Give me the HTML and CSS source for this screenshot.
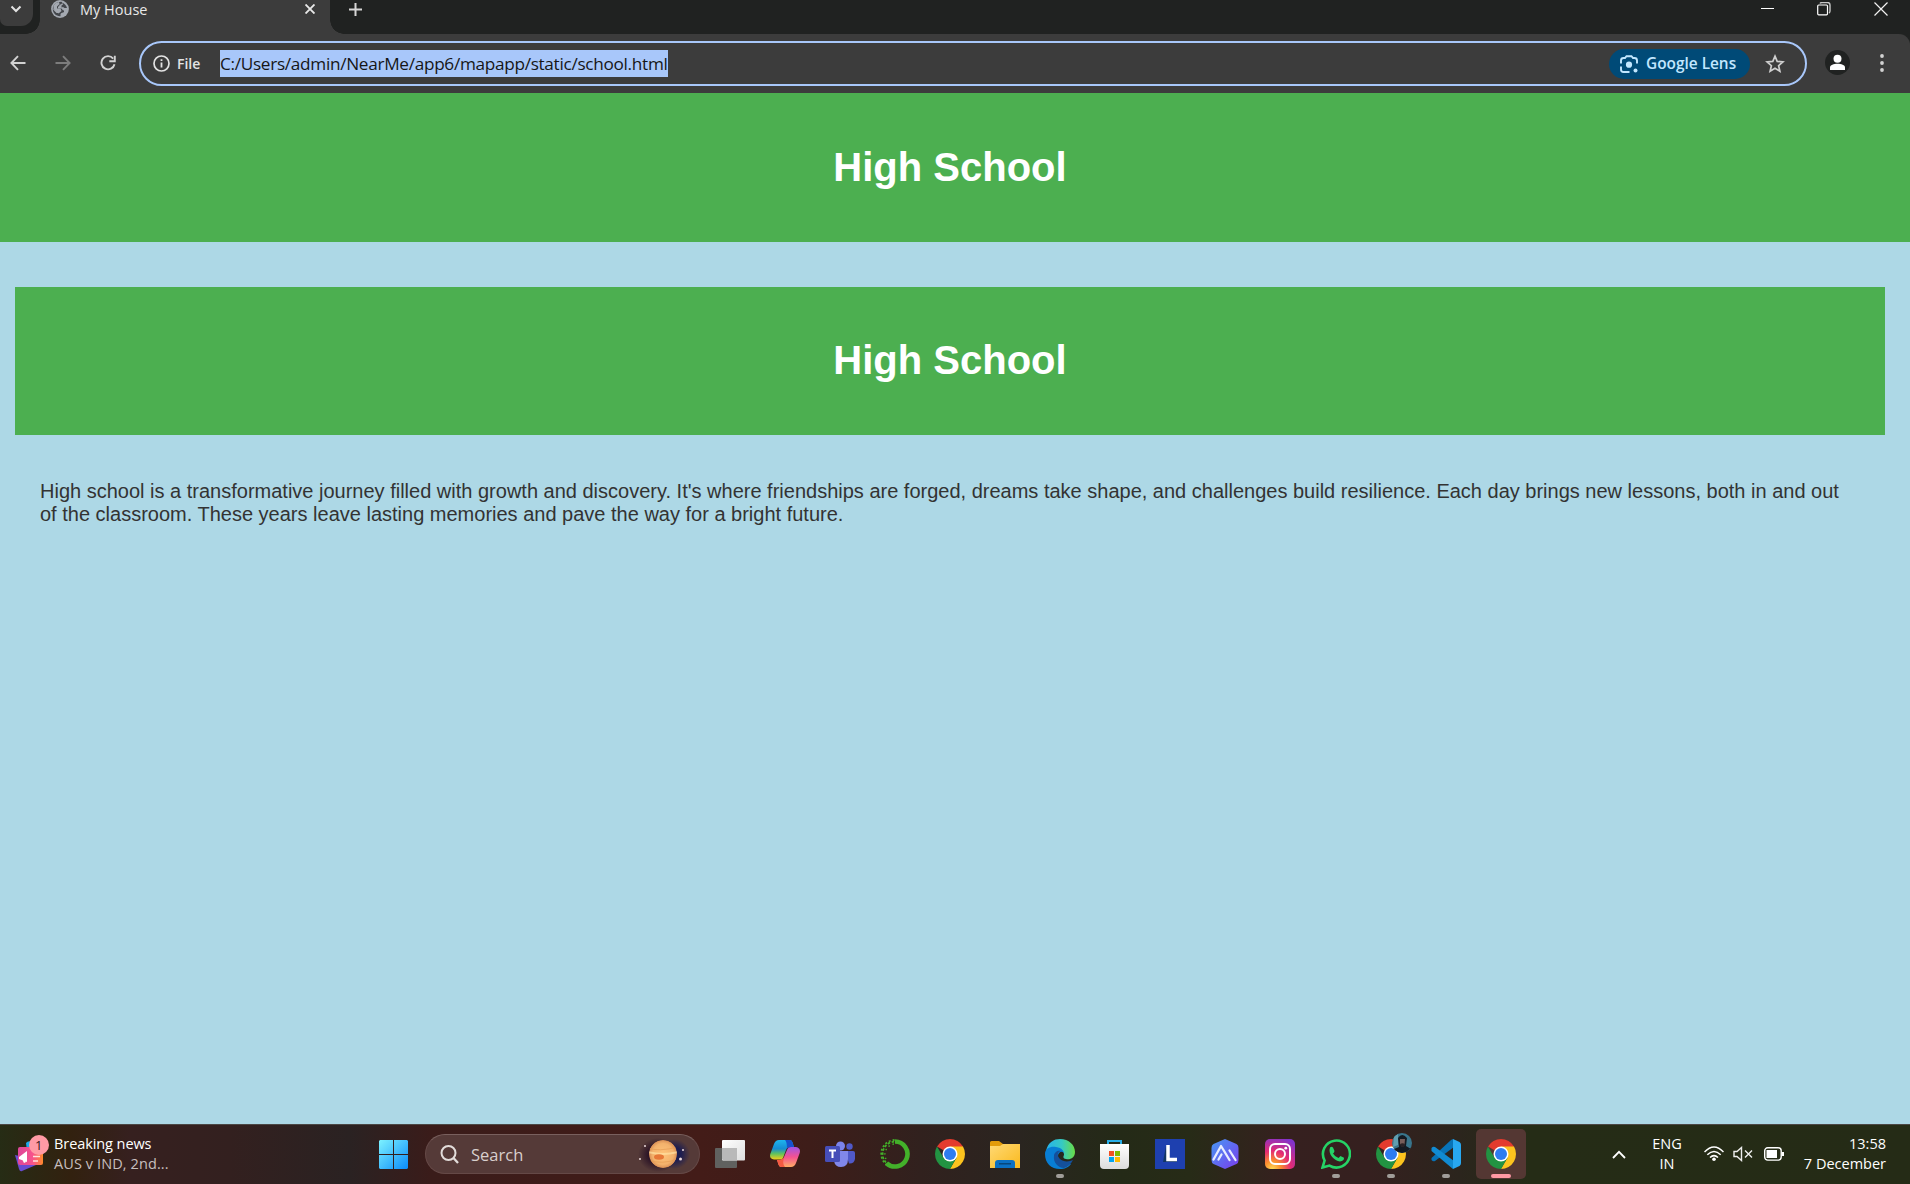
FILE: index.html
```html
<!DOCTYPE html>
<html lang="en">
<head>
<meta charset="utf-8">
<title>My House</title>
<link rel="stylesheet" href="styles.css">
</head>
<body>
<svg class="defs" width="0" height="0">
  <defs>
    <linearGradient id="win" x1="0" y1="0" x2="1" y2="1"><stop stop-color="#7df2ff"/><stop offset="1" stop-color="#0a8bfa"/></linearGradient>
    <symbol id="chrome" viewBox="0 0 30 30">
      <path d="M15 15L2.01 7.5A15 15 0 0 1 27.99 7.5Z" fill="#e33b2e"/>
      <path d="M15 7.5H27.99A15 15 0 0 1 15 30L21.5 18.7Z" fill="#fcc31e"/>
      <path d="M8.5 18.75L2.01 7.5A15 15 0 0 0 15 30L21.5 18.75L15 15Z" fill="#229342"/>
      <circle cx="15" cy="15" r="7.5" fill="#fff"/><circle cx="15" cy="15" r="6" fill="#2d7cf0"/>
    </symbol>
  </defs>
</svg>

<div class="browser">
<div class="tabstrip">
  <div class="tab-search"><svg width="12" height="8" viewBox="0 0 12 8"><path d="M1.5 1.5L6 6L10.500 1.500" fill="none" stroke="#e3e3e3" stroke-width="2"/></svg></div>
  <div class="tab">
    <svg class="globe" width="18" height="18" viewBox="0 0 18 18"><circle cx="9" cy="9" r="8.900" fill="#a4a9b1"/><path d="M10.500 1.800C12 3 10.500 4.500 9 4.500C8 4.500 9 6.500 7 6.500V8.500H10C11.500 8.500 11 10.500 13 10.500V12C12 13 10 12.500 9.500 14V16.200C5 16.500 1.800 13 1.800 9.300L5.500 13H8V11C6.500 11 6.500 9.300 5 9.300H1.800C1.800 5 5 1.600 10.500 1.800Z" fill="#43464b"/><path d="M2.500 6Q4 2.500 8 2L8.500 4L6 6.500V8.500H9.500L10.500 11L7.500 13.500L5 10.500L2.500 9Z" fill="#a4a9b1"/><path d="M11 2.500Q15 4 16 8H13.500L12 7L10.500 7.500V5.500L12 4.500Z" fill="#43464b"/></svg>
    <span class="tab-title">My House</span>
    <svg class="tab-close" width="10" height="10" viewBox="0 0 10 10"><path d="M.5.5L9.500 9.500M9.500.5L.5 9.500" stroke="#e8e8e8" stroke-width="1.900"/></svg>
  </div>
  <svg class="tab-new" width="13" height="13" viewBox="0 0 13 13"><path d="M6.500 0V13M0 6.500H13" stroke="#d6d6d6" stroke-width="2"/></svg>
  <div class="window-controls">
    <svg width="13" height="14" viewBox="0 0 13 14"><path d="M0 6.500H13" stroke="#fff"/></svg>
    <svg width="14" height="14" viewBox="0 0 14 14"><path d="M3 1.500Q3.500.5 5 .5H10.500Q13 .5 13 3V9Q13 10.500 12 11" fill="none" stroke="#c8c8c8" stroke-width="1.400"/><rect x=".7" y="3" width="9.800" height="9.800" rx="1" fill="none" stroke="#fff" stroke-width="1.200"/></svg>
    <svg width="14" height="14" viewBox="0 0 14 14"><path d="M.5.5L13.500 13.500M13.500.5L.5 13.500" stroke="#f2f2f2" stroke-width="1.200"/></svg>
  </div>
</div>

<div class="toolbar">
  <div class="nav">
    <svg width="16" height="16" viewBox="0 0 16 16" fill="none" stroke="#d2d2d2" stroke-width="1.900"><path d="M15.500 8H2M8 1.200L1.400 8L8 14.800"/></svg>
    <svg width="16" height="16" viewBox="0 0 16 16" fill="none" stroke="#7d7d7d" stroke-width="1.900"><path d="M.5 8H14M8 1.200L14.600 8L8 14.800"/></svg>
    <svg width="16" height="16" viewBox="0 0 16 16"><path d="M13.200 3.600A6.600 6.600 0 1 0 14.500 9.200" fill="none" stroke="#d2d2d2" stroke-width="1.900"/><path d="M14.800.8V6.200H9.300" fill="none" stroke="#d2d2d2" stroke-width="1.900"/></svg>
  </div>
  <div class="omnibox">
    <svg class="info" width="17" height="17" viewBox="0 0 17 17"><circle cx="8.500" cy="8.500" r="7.500" fill="none" stroke="#e3e3e3" stroke-width="1.700"/><path d="M8.500 7.500V12.500M8.500 4.300V6.100" stroke="#e3e3e3" stroke-width="1.800"/></svg>
    <span class="scheme">File</span>
    <span class="url">C:/Users/admin/NearMe/app6/mapapp/static/school.html</span>
    <div class="lens">
      <svg width="18" height="18" viewBox="0 0 18 18" fill="none" stroke="#c2e7ff" stroke-width="1.900"><path d="M1 8.500V5.500Q1 3 3.500 3H5L6.500 1.200H11.500L13 3H14.500Q17 3 17 5.500V8.500M1 11.500V14.500Q1 17 3.500 17H9.500"/><circle cx="9" cy="9.700" r="3.100" fill="#c2e7ff" stroke="none"/><circle cx="15.500" cy="15.500" r="2" fill="#c2e7ff" stroke="none"/></svg>
      <span class="lens-text">Google Lens</span>
    </div>
    <svg class="star" width="20" height="20" viewBox="0 0 20 20"><path d="M10 2.200L12.200 7.400L17.900 7.900L13.600 11.700L14.900 17.300L10 14.300L5.100 17.300L6.400 11.700L2.100 7.900L7.800 7.400Z" fill="none" stroke="#cfcfcf" stroke-width="1.700"/></svg>
  </div>
  <div class="avatar"><svg width="25" height="25" viewBox="0 0 25 25"><circle cx="12.500" cy="12.500" r="12.500" fill="#202221"/><circle cx="12.500" cy="8.800" r="4" fill="#fff"/><path d="M5 20V17.500C5 12.500 20 12.500 20 17.500V20Z" fill="#fff"/></svg></div>
  <svg class="menu" width="4" height="18" viewBox="0 0 4 18" fill="#d2d2d2"><circle cx="2" cy="2" r="1.900"/><circle cx="2" cy="9" r="1.900"/><circle cx="2" cy="16" r="1.900"/></svg>
</div>
</div>

<main class="page">
  <header class="banner banner-top"><h1>High School</h1></header>
  <section class="content">
    <div class="banner"><h1>High School</h1></div>
    <p class="copy">High school is a transformative journey filled with growth and discovery. It's where friendships are forged, dreams take shape, and challenges build resilience. Each day brings new lessons, both in and out of the classroom. These years leave lasting memories and pave the way for a bright future.</p>
  </section>
</main>

<footer class="taskbar">
  <div class="news">
    <svg width="36" height="38" viewBox="0 0 36 38"><defs><linearGradient id="nw"><stop stop-color="#dc469a"/><stop offset=".6" stop-color="#f8538b"/><stop offset="1" stop-color="#ff8a2a"/></linearGradient></defs><path d="M11 8Q13 5 18 7L23 22L13 24Z" fill="#19a9ed"/><path d="M0 20L22 25L21 30L7 36Q5 37 4 34Z" fill="#684bd2"/><rect x="3" y="12" width="25" height="18" rx="2" fill="url(#nw)"/><path d="M4 22L12 16V27L4 24ZM7 24L11 27L9 28Z" fill="#fff"/><path d="M18 21.500H25M18 26H23" stroke="#ffe0dc" stroke-width="1.500"/><circle cx="24" cy="10" r="10" fill="#ff9aa5"/></svg>
    <span class="badge">1</span>
    <div class="news-text"><span class="news-title">Breaking news</span><span class="news-sub">AUS v IND, 2nd...</span></div>
  </div>
  <div class="app start"><svg width="29" height="29" viewBox="0 0 29 29"><path d="M1 0H14V14H0V1ZM15 0H28L29 1V14H15ZM0 15H14V29H1L0 28ZM15 15H29V28L28 29H15Z" fill="url(#win)"/></svg></div>
  <div class="search">
    <svg width="19" height="19" viewBox="0 0 19 19" fill="none" stroke="#e2dcda" stroke-width="2"><circle cx="8.500" cy="8" r="7"/><path d="M13.500 13L18 18" stroke-width="2.300"/></svg>
    <span class="search-text">Search</span>
    <svg class="planet" width="52" height="38" viewBox="0 0 52 38"><defs><radialGradient id="space"><stop offset=".45" stop-color="#291225"/><stop offset="1" stop-color="#291225" stop-opacity="0"/></radialGradient><radialGradient id="sp2"><stop offset=".45" stop-color="#1d1d50"/><stop offset="1" stop-color="#1d1d50" stop-opacity="0"/></radialGradient><radialGradient id="pl"><stop stop-color="#ffc37a"/><stop offset=".75" stop-color="#f3b26c"/><stop offset="1" stop-color="#d98f55"/></radialGradient><clipPath id="pc"><circle cx="25" cy="19" r="14"/></clipPath></defs><ellipse cx="20" cy="20" rx="20" ry="17" fill="url(#space)"/><ellipse cx="36" cy="19" rx="16" ry="15" fill="url(#sp2)"/><g clip-path="url(#pc)"><circle cx="25" cy="19" r="14" fill="url(#pl)"/><path d="M10 13Q20 17 40 12M10 25Q24 30 40 24" fill="none" stroke="#e59d56" stroke-width="1" opacity=".7"/><path d="M10 17Q25 21 40 17" fill="none" stroke="#ffe1a3" stroke-width="1.800" opacity=".7"/><ellipse cx="21" cy="22" rx="5" ry="2.700" fill="#e77838"/></g><g fill="#ead9da"><circle cx="7" cy="11" r="1"/><circle cx="2" cy="24" r="1"/><circle cx="45" cy="15" r="1"/><circle cx="42.500" cy="24" r="1.500"/></g></svg>
  </div>
  <div class="apps">
    <div class="app"><svg width="30" height="30" viewBox="0 0 30 30"><defs><linearGradient id="tv" x2="1" y2="1"><stop stop-color="#fff"/><stop offset="1" stop-color="#dedede"/></linearGradient></defs><rect y="9" width="22" height="20" rx="1" fill="#60615f"/><rect x="7" y="1" width="23" height="20.500" rx="1" fill="url(#tv)"/><path d="M7 9H22V21.500H8L7 20Z" fill="#b9b9b9"/></svg></div>
    <div class="app"><svg width="30" height="30" viewBox="0 0 30 30"><defs><linearGradient id="c1" x2="0" y2="1"><stop stop-color="#1eb4ee"/><stop offset=".45" stop-color="#168bd2"/><stop offset=".7" stop-color="#5fc25e"/><stop offset="1" stop-color="#f4ce18"/></linearGradient><linearGradient id="c2" x2="0" y2="1"><stop stop-color="#a154e5"/><stop offset=".5" stop-color="#f45291"/><stop offset="1" stop-color="#ffad64"/></linearGradient></defs><path d="M9 1H20Q22 1 23 5L24 8H20Q17 8 16 11L13 19Q12 21 9 20.500H4Q-1 20 .3 15L4 5Q5.500 1 9 1Z" fill="url(#c1)"/><path d="M15 1H20Q22 1 23 5L24 8H20L17 9Q17 3 15 1Z" fill="#1752ce"/><path d="M21 8H26Q31 9 29.700 14L26 24Q24.500 28 21 28H11Q9 28 8 24L7 21H10Q13 21 14 18L17 11Q18 8 21 8Z" fill="url(#c2)"/><path d="M7 21H10L14 19Q12 25 15 28H11Q9 28 8 24Z" fill="#f45a42"/></svg></div>
    <div class="app"><svg width="30" height="30" viewBox="0 0 30 30"><circle cx="15.500" cy="7" r="4.500" fill="#7b83eb"/><circle cx="24.500" cy="7.500" r="3.200" fill="#5059c9"/><path d="M20 12H28Q30 12 30 14V20Q29 25 24 24.500Z" fill="#5059c9"/><path d="M9 12H23V20Q23 28 16 28Q10 28 9 22Z" fill="#8187ea"/><rect y="7" width="15" height="16" rx="1.500" fill="#464eb8"/><path d="M4 11.500H11M7.500 11.500V19" stroke="#fff" stroke-width="2"/></svg></div>
    <div class="app"><svg width="30" height="30" viewBox="0 0 30 30" fill="none" stroke="#43b02a"><path d="M15 2.500A12.500 12.500 0 1 1 6.500 24.200" stroke-width="4.600"/><path d="M6 23.500A12.300 12.300 0 0 1 15 2.700" stroke-width="1.800" stroke-dasharray="2.500 1.700"/><path d="M7 26A13.800 13.800 0 0 1 15 1" stroke-width="1.800" stroke-dasharray="2 2"/><path d="M6 20A10.500 10.500 0 0 1 14 5" stroke-width="1.300" stroke-dasharray="1.500 3"/></svg></div>
    <div class="app"><svg width="30" height="30"><use href="#chrome"/></svg></div>
    <div class="app"><svg width="30" height="30" viewBox="0 0 30 30"><defs><linearGradient id="fo" x2="1" y2="1"><stop stop-color="#ffd975"/><stop offset="1" stop-color="#fab91c"/></linearGradient></defs><path d="M0 3.500Q0 2 1.500 2H9L13 5H28V10H0Z" fill="#e39c0b"/><path d="M0 7H10L13 5H30V29H0Z" fill="url(#fo)"/><path d="M5 29V24Q5 21 8 21H22Q25 21 25 24V29Z" fill="#0b70c3"/><path d="M9 24.800H21" stroke="#07406f" stroke-width="1.300"/></svg></div>
    <div class="app running"><svg width="30" height="30" viewBox="0 0 30 30"><defs><linearGradient id="e1"><stop stop-color="#26b3ed"/><stop offset=".55" stop-color="#36c9c3"/><stop offset="1" stop-color="#69dc45"/></linearGradient></defs><path d="M1 12C3 3 9 0 15 0C24 0 30 6 30 13C30 19 25 21 21 20C18 19.500 18 18 19 16C20 11 11 7 1 12Z" fill="url(#e1)"/><path d="M0 15C0 9 6 7 11 8C17 9 19 12 19 15C18 11 13 13 13 17C13 22 18 26 26 25C22 30 17 30 15 30C6 30 0 24 0 15Z" fill="#087ed4"/><path d="M9 17C9 13 13 11 16 12C12 13 12 17 15 20C18 23 24 23 28 21Q25 27 19 29C13 29 8 23 9 17Z" fill="#14509c"/></svg></div>
    <div class="app"><svg width="30" height="30" viewBox="0 0 30 30"><defs><linearGradient id="st" x2="0" y2="1"><stop stop-color="#fff"/><stop offset="1" stop-color="#dcdcdc"/></linearGradient></defs><path d="M8 6V2H21V6" fill="none" stroke="#28aee8" stroke-width="2"/><path d="M0 5H29V26Q29 30 25 30H4Q0 30 0 26Z" fill="url(#st)"/><path d="M9 12H14V17H9Z" fill="#f25022"/><path d="M15 12H20V17H15Z" fill="#7fba00"/><path d="M9 18H14V23H9Z" fill="#00a4ef"/><path d="M15 18H20V23H15Z" fill="#ffb900"/></svg></div>
    <div class="app"><svg width="30" height="30" viewBox="0 0 30 30"><path d="M0 0H30V30H0Z" fill="#1e40af"/><path d="M11 7L8 23H22L22 21H13Z" fill="#123564"/><path d="M13 6V20.500H22" fill="none" stroke="#fff" stroke-width="3.500"/></svg></div>
    <div class="app"><svg width="30" height="30" viewBox="0 0 30 30"><defs><linearGradient id="am" x2="1" y2="1"><stop stop-color="#4798f4"/><stop offset="1" stop-color="#793cec"/></linearGradient></defs><path d="M15 0L26.500 5Q28.500 6 28.500 9V21Q28.500 24 26.500 25L15 30L3.500 25Q1.500 24 1.500 21V9Q1.500 6 3.500 5Z" fill="url(#am)"/><path d="M3.500 20.500L11 7L15 13.500M8.500 20.500L11.500 15.500M13.500 11L19.500 21M19.500 11.500L25.500 21" fill="none" stroke="#e8edff" stroke-width="2.300" stroke-linecap="round" stroke-linejoin="round"/></svg></div>
    <div class="app"><svg width="30" height="30" viewBox="0 0 30 30"><defs><radialGradient id="ig" cx=".25" cy="1" r="1.100"><stop stop-color="#ffda54"/><stop offset=".25" stop-color="#fb8d2e"/><stop offset=".55" stop-color="#e42b73"/><stop offset="1" stop-color="#8233cc"/></radialGradient></defs><rect width="30" height="30" rx="5" fill="url(#ig)"/><rect x="5" y="5" width="20" height="20" rx="5" fill="none" stroke="#fff" stroke-width="2"/><circle cx="15" cy="15" r="5" fill="none" stroke="#fff" stroke-width="2"/><circle cx="20.800" cy="9.200" r="1.400" fill="#fff"/></svg></div>
    <div class="app running whatsapp"><svg width="30" height="30" viewBox="0 0 30 30"><path d="M1.500 28.500L3.600 21.500A13.500 13.500 0 1 1 8.500 26.600Z" fill="none" stroke="#25d366" stroke-width="2.600"/><path d="M9 8.500Q10.500 7 12 8.500L13.500 12Q13.300 13.500 12 14.500Q14 18 17.500 19L19.500 17L23 18.800Q23.300 22 19 22.500C13.500 22 6.500 15 9 8.500Z" fill="#25d366"/></svg></div>
    <div class="app running profile"><svg width="30" height="30"><use href="#chrome"/></svg><svg class="face" width="20" height="20" viewBox="0 0 20 20"><defs><clipPath id="fc"><circle cx="10" cy="10" r="10"/></clipPath></defs><g clip-path="url(#fc)"><path d="M0 0H20V20H0Z" fill="#39758c"/><path d="M2 3L6 1V12L1 14Z" fill="#609eb0"/><path d="M1 20L2 16L7 14L6 5Q10-1 15 5L14 13L19 16V20Z" fill="#141a22"/><path d="M8 6H13L12.500 12L10.500 14L8 11Z" fill="#775e5b"/><path d="M8 11Q10.500 9.500 13 11L12 14H9Z" fill="#2a2226"/></g></svg></div>
    <div class="app running"><svg width="30" height="30" viewBox="0 0 30 30"><path d="M22 0L23 8L4 22Q2 23 .5 21V19L20 1Z" fill="#0873b7"/><path d="M.5 9Q2 7 4 8L23 22L22 30L.5 12Z" fill="#118bd2"/><path d="M22 0L28.500 3Q30 4 30 6V24Q30 26 28.500 27L22 30Z" fill="#28a8f1"/></svg></div>
    <div class="app running active"><svg width="30" height="30"><use href="#chrome"/></svg></div>
  </div>
  <div class="tray">
    <svg width="14" height="9" viewBox="0 0 14 9"><path d="M1 8L7 1.800L13 8" fill="none" stroke="#fff" stroke-width="1.800"/></svg>
    <div class="lang"><span>ENG</span><span>IN</span></div>
    <svg class="wifi" width="20" height="16" viewBox="0 0 20 16" fill="none" stroke="#fff" stroke-width="1.500"><path d="M.5 6Q10-4 19.500 6M3.300 8.800Q10 2 16.700 8.800M6 11.500Q10 7.700 14 11.500"/><circle cx="10" cy="13.300" r="1.800" fill="#fff" stroke="none"/></svg>
    <svg class="sound" width="20" height="16" viewBox="0 0 20 16" fill="none" stroke="#eee" stroke-width="1.400"><path d="M1 5.500H4L8.500 1.500V14.500L4 10.500H1Z"/><path d="M12 4.500L19 11.500M19 4.500L12 11.500"/></svg>
    <svg class="battery" width="20" height="14" viewBox="0 0 20 14"><rect x=".7" y=".8" width="16.500" height="12.300" rx="3" fill="none" stroke="#fff" stroke-width="1.400"/><path d="M2.500 3H13V11H2.500ZM17.500 5H20V9H17.500Z" fill="#fff"/></svg>
    <div class="clock"><span>13:58</span><span>7 December</span></div>
  </div>
</footer>
</body>
</html>
```
FILE: styles.css
```css
* { box-sizing: border-box; }

body {
  margin: 0;
  height: 1184px;
  display: flex;
  flex-direction: column;
  overflow: hidden;
  background: #add8e6;
  font-family: "Open Sans", "Noto Sans", sans-serif;
}

svg { display: block; flex: none; }
.defs { position: absolute; }
span { white-space: nowrap; }

/* Browser window */
.browser {
  flex: none;
  background: #202221;
}

.tabstrip {
  height: 34px;
  display: flex;
}

.tab-search {
  width: 33px;
  height: 26px;
  padding: 5px 0 0 10px;
  border-radius: 0 0 12px 7px;
  background: #3c3c3c;
}

.tab {
  position: relative;
  width: 290px;
  height: 34px;
  margin-left: 7px;
  display: flex;
  background: #3c3c3c;
}

.tab::before,
.tab::after {
  content: "";
  position: absolute;
  bottom: 0;
  width: 14px;
  height: 14px;
}
.tab::before { right: 100%; background: radial-gradient(circle at 0 0, transparent 13.5px, #3c3c3c 14px); }
.tab::after { left: 100%; background: radial-gradient(circle at 100% 0, transparent 13.5px, #3c3c3c 14px); }

.globe { margin-left: 11px; }
.tab-title {
  margin: 0 0 0 11px;
  color: #e8e8e8;
  font-size: 14.5px;
  line-height: 20px;
}
.tab-close { margin: 4px 15px 0 auto; }
.tab-new { margin: 3px 0 0 19px; }

.window-controls {
  margin: 2px 22px 0 auto;
  display: flex;
  gap: 43px;
}

.toolbar {
  height: 59px;
  display: flex;
  align-items: center;
  padding: 0 26px 0 10px;
  background: #3c3c3c;
  border-radius: 0 11px 0 0;
}

.nav {
  display: flex;
  gap: 29px;
  width: 129px;
  padding-bottom: 2px;
}

.omnibox {
  width: 1668px;
  height: 45px;
  display: flex;
  align-items: center;
  border: 2px solid #a8c7fa;
  border-radius: 23px;
  padding: 0 20px 0 12px;
}
.scheme {
  width: 43px;
  margin-left: 7px;
  padding-bottom: 1px;
  color: #e3e3e3;
  font-size: 14px;
  font-weight: 600;
}
.url {
  width: 448px;
  height: 27px;
  line-height: 27px;
  background: #a8c7fa;
  color: #161616;
  font-size: 17.2px;
  letter-spacing: -.3px;
}
.lens {
  width: 141px;
  height: 30px;
  margin-left: auto;
  padding-left: 11px;
  display: flex;
  align-items: center;
  gap: 8px;
  border-radius: 15px;
  background: #004a77;
  color: #c2e7ff;
}
.lens-text { font-size: 15.4px; font-weight: 600; }
.star { margin-left: 15px; }
.avatar { margin: -2px 0 0 18px; }
.menu { margin: -1px 0 0 auto; }

/* School page */
.page {
  flex: 1;
  font-family: "Liberation Sans", Arial, sans-serif;
}
.banner {
  height: 148px;
  display: flex;
  align-items: center;
  justify-content: center;
  padding-bottom: 2px;
  background: #4caf50;
}
.banner-top {
  height: 149px;
  padding-right: 10px;
}
h1 {
  margin: 0;
  color: #fff;
  font-size: 40px;
  line-height: 46px;
}
.content { padding: 45px 25px 0 15px; }
.copy {
  margin: 45px 25px 0;
  color: #333;
  font-size: 20px;
  line-height: 23px;
}

/* Taskbar */
.taskbar {
  height: 60px;
  flex: none;
  display: flex;
  align-items: center;
  padding-bottom: 1px;
  border-top: 1px solid #4b4745;
  background: linear-gradient(90deg, #262c15 0, #32210f 70px, #36201f 130px, #33201f 230px, #2a2222 350px, #3a1c1a 430px, #431c18 700px, #3e1d19 810px, #31211e 920px, #2a2520 1020px, #242a17 1120px, #272b17 1190px, #36201f 1285px, #35201f 1370px, #2b251d 1460px, #252c16 1530px, #252b16 100%);
}

.news {
  position: relative;
  width: 368px;
  display: flex;
  padding-left: 15px;
}
.badge {
  position: absolute;
  left: 35px;
  top: 0;
  color: #35191b;
  font-size: 13px;
  line-height: 20px;
}
.news-text {
  display: flex;
  flex-direction: column;
  margin: -1px 0 0 3px;
  font-size: 14.5px;
  line-height: 20px;
}
.news-title { color: #fff; letter-spacing: -.08px; }
.news-sub { color: #c7bfbe; letter-spacing: .1px; }

.app {
  position: relative;
  width: 50px;
  height: 50px;
  display: flex;
  align-items: center;
  justify-content: center;
  border-radius: 5px;
}
.running::after {
  content: "";
  position: absolute;
  left: 21px;
  bottom: 1px;
  width: 8px;
  height: 4px;
  border-radius: 2px;
  background: #a09d99;
}
.whatsapp { margin-left: 1px; }
.active { background: #543733; }
.active::after {
  left: 15px;
  width: 20px;
  background: #ff99a4;
}
.face {
  position: absolute;
  left: 26px;
  top: 4px;
}

.search {
  width: 275px;
  height: 40px;
  margin: 0 5px 0 7px;
  padding: 0 9px 0 14px;
  display: flex;
  align-items: center;
  border: 1px solid #654947;
  border-top-color: #79605e;
  border-radius: 20px;
  background: #553a38;
}
.search-text {
  margin-left: 12px;
  color: #d8cfcd;
  font-size: 16.5px;
}
.planet { margin-left: auto; }

.apps { display: flex; gap: 5px; }

.tray {
  margin-left: auto;
  display: flex;
  align-items: center;
  padding-right: 24px;
  color: #fff;
  font-size: 14.5px;
  line-height: 20px;
}
.lang {
  width: 32px;
  margin: -1px 0 0 25px;
  display: flex;
  flex-direction: column;
  align-items: center;
}
.wifi { margin-left: 21px; }
.sound { margin-left: 9px; }
.battery { margin-left: 11px; }
.clock {
  width: 102px;
  margin-top: -1px;
  display: flex;
  flex-direction: column;
  align-items: flex-end;
}
```
